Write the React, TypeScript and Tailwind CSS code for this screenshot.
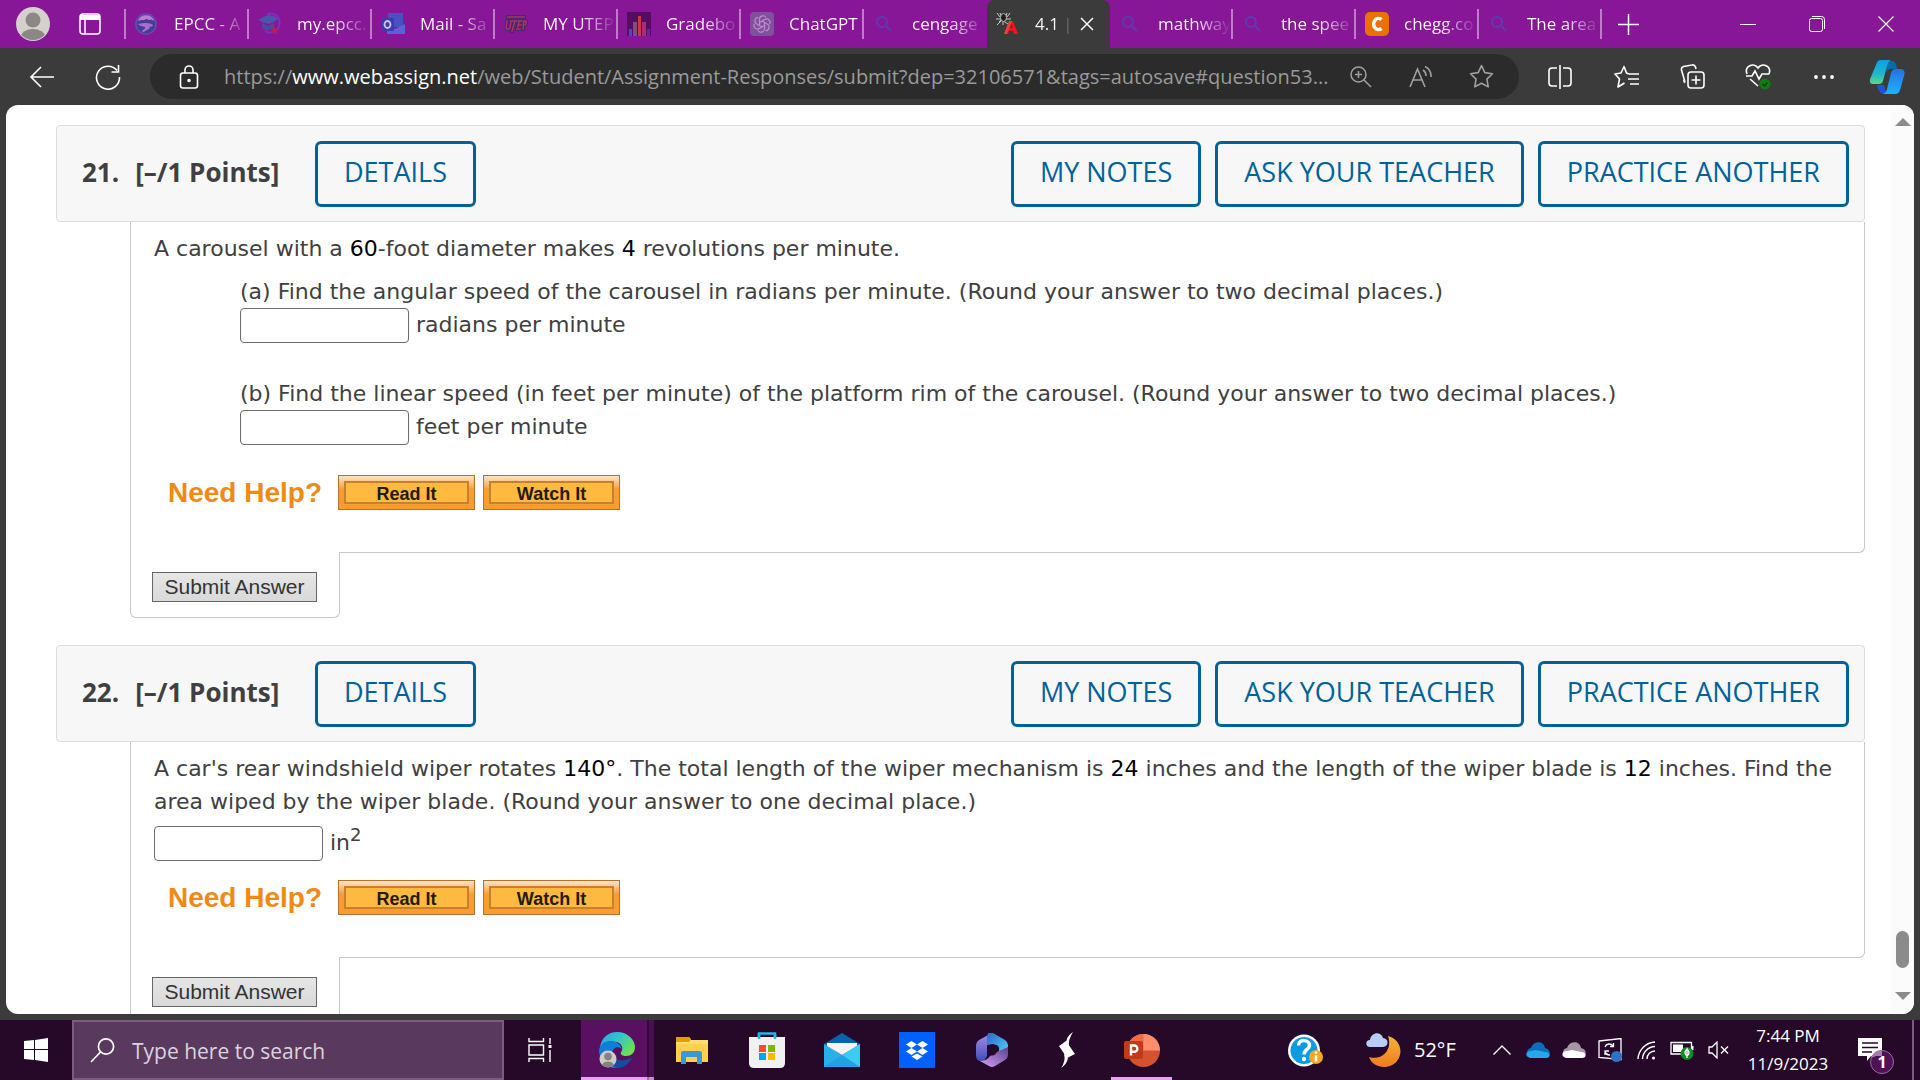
import React from "react";
import clsx from "clsx";

type TabItem = {
  title: string;
  icon: React.ReactNode;
  active?: boolean;
  divider?: boolean;
};

const SearchFavicon = () => (
  <svg width="18" height="18" viewBox="0 0 18 18" fill="none" stroke="#5a3bb0" strokeWidth="2" className="ml-0.5">
    <circle cx="7" cy="7" r="5" />
    <path d="M11 11l5 5" />
  </svg>
);

const EpccFavicon = () => (
  <svg width="22" height="22" viewBox="0 0 24 24">
    <circle cx="12" cy="12" r="11" fill="#3f3f9c" />
    <path d="M3 9a9.500 9.500 0 0 1 18 0q-4-3-6-1-2-3-5 0-3-1-7 1z" fill="#c07bd0" />
    <path d="M3 12q4-1 9-1t8 2q-1 2-5 2 3 1-1 3l-5 3q-2-1-1-2 5-3 2-4-4 0-7-3z" fill="#a86fc8" />
    <circle cx="12" cy="12" r="11" fill="none" stroke="#6c4bb5" strokeWidth="1.500" />
  </svg>
);

const GradFavicon = () => (
  <svg width="24" height="24" viewBox="0 0 24 24">
    <path d="M9 2a9.500 9.500 0 1 1-2 17" fill="none" stroke="#7a2fc0" strokeWidth="2" />
    <path d="M0 8q6-4 11-5 6 1 9 4-5 4-9 5-6-1-11-4z" fill="#4c55ac" />
    <path d="M4 11v5c3 3 9 3 12 0v-5l-6 3z" fill="#4a4aa0" />
    <path d="M15 14l6 5-3 0 1 3-2 0-1-3-2 2z" fill="#c01f4c" />
  </svg>
);

const OutlookFavicon = () => (
  <svg width="24" height="24" viewBox="0 0 24 24">
    <rect x="7" y="1" width="15" height="14" fill="#4a50c4" />
    <path d="M6 12l8 5 10-5v10H6z" fill="#5a62d8" />
    <rect x="0" y="6" width="13" height="13" rx="1" fill="#3a3cae" />
    <ellipse cx="6.500" cy="12.500" rx="3" ry="3.500" fill="none" stroke="#cfc3ee" strokeWidth="1.800" />
  </svg>
);

const UtepFavicon = () => (
  <svg width="24" height="22" viewBox="0 0 24 22" fill="none" strokeLinecap="square">
    <path d="M4 4h16M3 8l-1 7q1 3 4 0l1-7M8 8h5M11 8l-3 10M14 14l1-6h3M14 12h3M13 16h3M19 16l1-8h2q1 4-2 4" stroke="#3d2a6e" strokeWidth="3.500" />
    <path d="M4 4h16M3 8l-1 7q1 3 4 0l1-7M8 8h5M11 8l-3 10M14 14l1-6h3M14 12h3M13 16h3M19 16l1-8h2q1 4-2 4" stroke="#b0355e" strokeWidth="1.500" />
  </svg>
);

const GradebookFavicon = () => (
  <svg width="24" height="24" viewBox="0 0 24 24">
    <rect width="24" height="24" fill="#560c60" />
    <rect x="2" y="17" width="3" height="7" fill="#5048c0" />
    <rect x="6" y="10" width="4" height="14" fill="#8a4a78" />
    <rect x="11" y="4" width="3" height="20" fill="#c23a50" />
    <rect x="15" y="10" width="4" height="14" fill="#b32a70" />
    <rect x="20" y="17" width="3" height="7" fill="#7020a0" />
  </svg>
);

const GptFavicon = () => (
  <svg width="24" height="24" viewBox="0 0 24 24" fill="none" stroke="#c08ad0" strokeWidth="1.200">
    <rect width="24" height="24" rx="4" fill="#81509b" stroke="none" />
    {[0, 60, 120, 180, 240, 300].map((angle) => (
      <path key={angle} d="M9.500 13.500V7a3.500 3.500 0 0 1 6.500-1.500" transform={`rotate(${angle} 12 12)`} />
    ))}
  </svg>
);

const WebassignFavicon = () => (
  <svg width="24" height="24" viewBox="0 0 24 24">
    <path d="M1 1l3 4M14 1l-3 4M0 7h15M1 13l5-5 6 4M7 3v10M4 1l2 6M11 1l-2 6M3 10l3-3" stroke="#c8c8c8" strokeWidth="1" fill="none" />
    <ellipse cx="7.500" cy="5.500" rx="3" ry="4" fill="#1c1c1c" stroke="#bbb" strokeWidth="1" />
    <path d="M8 22h4l1-3h4l1 3h4L17 9h-4z" fill="#e51a1a" />
    <path d="M14 16h2.500l-1-4z" fill="#3b3b3b" />
    <path d="M13 9h3l-5 13H8z" fill="#f06a60" opacity="0.500" />
  </svg>
);

const CheggFavicon = () => (
  <svg width="24" height="24" viewBox="0 0 24 24">
    <rect width="24" height="24" rx="5" fill="#eb7100" />
    <path d="M16.500 7.500a5 5.500 0 1 0 0 9" fill="none" stroke="#fff" strokeWidth="3.500" />
  </svg>
);

const TABS: TabItem[] = [
  { title: "EPCC - A", icon: <EpccFavicon />, divider: true },
  { title: "my.epcc.", icon: <GradFavicon />, divider: true },
  { title: "Mail - Sa", icon: <OutlookFavicon />, divider: true },
  { title: "MY UTEP", icon: <UtepFavicon />, divider: true },
  { title: "Gradebo", icon: <GradebookFavicon />, divider: true },
  { title: "ChatGPT", icon: <GptFavicon />, divider: true },
  { title: "cengage", icon: <SearchFavicon /> },
  { title: "4.1 |", icon: <WebassignFavicon />, active: true },
  { title: "mathway", icon: <SearchFavicon />, divider: true },
  { title: "the spee", icon: <SearchFavicon />, divider: true },
  { title: "chegg.co", icon: <CheggFavicon />, divider: true },
  { title: "The area", icon: <SearchFavicon />, divider: true },
];

const Tab = ({ title, icon, active, divider }: TabItem) => (
  <div
    className={clsx(
      "flex w-[123px] shrink-0 items-center pl-[9px]",
      active && "rounded-t-lg bg-[#3b3b3b]"
    )}
  >
    <span className="flex w-[39px] shrink-0 items-center">{icon}</span>
    <button
      className={clsx(
        "overflow-hidden bg-linear-to-r bg-clip-text text-left whitespace-nowrap text-transparent",
        active && "w-9 from-white from-60% to-[#4b4b4b]",
        !active && title === "ChatGPT" && "w-[72px] from-white to-white",
        !active && title !== "ChatGPT" && "w-[72px] from-white from-50% to-[#881798]"
      )}
    >
      {title}
    </button>
    {active && (
      <button aria-label="Close tab" className="flex w-8 justify-center">
        <svg width="14" height="14" viewBox="0 0 14 14" stroke="#fff" strokeWidth="1.500">
          <path d="M1 1l12 12M13 1L1 13" />
        </svg>
      </button>
    )}
    {divider && <span className="ml-auto h-[30px] w-0.5 shrink-0 bg-[#bd7cc6]" />}
  </div>
);

const TabStrip = () => (
  <div className="flex h-12 shrink-0 bg-[#881798] text-[17px]">
    <button aria-label="Profile" className="flex w-[66px] shrink-0 items-center justify-center">
      <svg width="34" height="34" viewBox="0 0 34 34">
        <clipPath id="avatar">
          <circle cx="17" cy="17" r="16" />
        </clipPath>
        <circle cx="17" cy="17" r="17" fill="#d3d0cd" />
        <circle cx="17" cy="13" r="7.500" fill="#8a8785" />
        <ellipse cx="17" cy="30" rx="12" ry="8" fill="#8a8785" clipPath="url(#avatar)" />
      </svg>
    </button>
    <button aria-label="Tab actions" className="flex w-12 shrink-0 items-center justify-center">
      <svg width="22" height="22" viewBox="0 0 22 22" fill="none" stroke="#fff" strokeWidth="1.500">
        <rect x="1" y="1" width="20" height="20" rx="3" />
        <path d="M6 7v14" />
        <path d="M1 2h20v5H1z" fill="#fff" stroke="none" />
      </svg>
    </button>
    <span className="ml-2.5 h-[30px] w-0.5 shrink-0 self-center bg-[#bd7cc6]" />
    {TABS.map((tab) => (
      <Tab key={tab.title} {...tab} />
    ))}
    <button aria-label="New tab" className="flex w-[52px] shrink-0 items-center justify-center">
      <svg width="21" height="21" viewBox="0 0 21 21" stroke="#fff" strokeWidth="1.500">
        <path d="M10.500 0v21M0 10.500h21" />
      </svg>
    </button>
    <div className="ml-auto flex">
      <button aria-label="Minimize" className="flex w-[69px] items-center justify-center">
        <span className="h-px w-4 bg-white" />
      </button>
      <button aria-label="Restore" className="flex w-[69px] items-center justify-center">
        <svg width="16" height="16" viewBox="0 0 16 16" fill="none" stroke="#fff">
          <rect x="0.500" y="2.500" width="13" height="13" rx="2" />
          <path d="M3 0.500h9.500a3 3 0 0 1 3 3V13" />
        </svg>
      </button>
      <button aria-label="Close" className="flex w-[69px] items-center justify-center">
        <svg width="16" height="16" viewBox="0 0 16 16" stroke="#fff" strokeWidth="1.200">
          <path d="M0.500 0.500l15 15M15.500 0.500l-15 15" />
        </svg>
      </button>
    </div>
  </div>
);

const ToolButton = ({ label, children }: { label: string; children: React.ReactNode }) => (
  <button aria-label={label} className="flex w-[66px] shrink-0 items-center justify-center">
    {children}
  </button>
);

const PillButton = ({ label, children }: { label: string; children: React.ReactNode }) => (
  <button aria-label={label} className="flex w-15 shrink-0 items-center justify-center">
    {children}
  </button>
);

const Toolbar = () => (
  <div className="flex h-[57px] shrink-0 items-center pl-[9px]">
    <ToolButton label="Back">
      <svg width="26" height="22" viewBox="0 0 26 22" fill="none" stroke="#fff" strokeWidth="1.600">
        <path d="M25 11H2M12 1L2 11l10 10" />
      </svg>
    </ToolButton>
    <ToolButton label="Refresh">
      <svg width="26" height="26" viewBox="0 0 26 26" fill="none" stroke="#fff" strokeWidth="1.600">
        <path d="M24.500 13A11.500 11.500 0 1 1 22 6.500M23.500 1v7H16.500" />
      </svg>
    </ToolButton>
    <div className="ml-[9px] flex h-[45px] min-w-0 flex-1 rounded-full bg-[#2b2b2b] pr-2">
      <button aria-label="Site information" className="flex w-[74px] shrink-0 items-center justify-center pl-1">
        <svg width="20" height="24" viewBox="0 0 20 24" fill="none" stroke="#fff" strokeWidth="1.600">
          <rect x="1.500" y="8" width="17" height="15" rx="2.500" />
          <path d="M6 8V5a4 4 0 0 1 8 0v3" />
          <circle cx="10" cy="15.500" r="1" fill="#fff" />
        </svg>
      </button>
      <div className="min-w-0 flex-1 self-center truncate text-[20px] text-[#9a9a9a]">
        https://<span className="text-white">www.webassign.net</span>
        /web/Student/Assignment-Responses/submit?dep=32106571&amp;tags=autosave#question53...
      </div>
      <PillButton label="Zoom">
        <svg width="22" height="22" viewBox="0 0 22 22" fill="none" stroke="#a0a0a0" strokeWidth="1.500">
          <circle cx="8.500" cy="8.500" r="7.500" />
          <path d="M14 14l7 7M8.500 5v7M5 8.500h7" />
        </svg>
      </PillButton>
      <PillButton label="Read aloud">
        <svg width="24" height="22" viewBox="0 0 24 22" fill="none" stroke="#a0a0a0" strokeWidth="1.600">
          <path d="M1 21L8.500 3 16 21M4 14h9M14 4a7 7 0 0 1 3 6M16 0.500a11 11 0 0 1 6 10.500" />
        </svg>
      </PillButton>
      <PillButton label="Add to favorites">
        <svg width="25" height="25" viewBox="0 0 24 24" fill="none" stroke="#a0a0a0" strokeWidth="1.500" strokeLinejoin="round">
          <path d="M12 1.500l3.200 6.800 7.300 1-5.300 5.200 1.300 7.500L12 18.500 5.500 22l1.300-7.500L1.500 9.300l7.300-1z" />
        </svg>
      </PillButton>
    </div>
    <div className="ml-2 flex h-full shrink-0 pr-[3px]">
      <ToolButton label="Split screen">
        <svg width="24" height="24" viewBox="0 0 24 24" fill="none" stroke="#fff" strokeWidth="1.600">
          <path d="M9 3H4a3 3 0 0 0-3 3v12a3 3 0 0 0 3 3h5M15 3h5a3 3 0 0 1 3 3v12a3 3 0 0 1-3 3h-5M12 0v24" />
        </svg>
      </ToolButton>
      <ToolButton label="Favorites">
        <svg width="25" height="24" viewBox="0 0 25 24" fill="none" stroke="#fff" strokeWidth="1.600" strokeLinejoin="round">
          <path d="M15 9L12.500 8 10 1.500 7 8 1 9l4.500 5L4 22l6.500-4M15 9h10M14 14h11M16 19h9" />
        </svg>
      </ToolButton>
      <ToolButton label="Collections">
        <svg width="25" height="25" viewBox="0 0 25 25" fill="none" stroke="#fff" strokeWidth="1.600">
          <path d="M5 18L1.500 6a3 3 0 0 1 2-3.500L12 1a3 3 0 0 1 3.500 2l.5 2M5 19a3 3 0 0 1-1-3" />
          <rect x="8" y="8" width="16" height="16" rx="3" />
          <path d="M16 11.500v9M11.500 16h9" />
        </svg>
      </ToolButton>
      <ToolButton label="Browser essentials">
        <svg width="26" height="26" viewBox="0 0 26 26" fill="none" stroke="#fff" strokeWidth="1.600">
          <path d="M2 10C-1 2 9-2 13 4 17-2 27 2 24 10M1 12h6l3-5 4 8 3-5h7M5 15l8 7" />
          <circle cx="20" cy="20" r="5.500" fill="#107c10" stroke="none" />
          <path d="M17.500 20l2 2 3-3.500" stroke="#06400a" strokeWidth="1.500" />
        </svg>
      </ToolButton>
      <ToolButton label="Settings and more">
        <svg width="20" height="4" viewBox="0 0 20 4" fill="#fff">
          <circle cx="2" cy="2" r="1.900" />
          <circle cx="10" cy="2" r="1.900" />
          <circle cx="18" cy="2" r="1.900" />
        </svg>
      </ToolButton>
      <button aria-label="Copilot" className="flex w-15 items-center justify-center">
        <svg width="36" height="34" viewBox="0 0 36 34">
          <defs>
            <linearGradient id="copilotLeft" x1="0" y1="0" x2="0" y2="1">
              <stop offset="0" stopColor="#0fa0e4" />
              <stop offset="0.600" stopColor="#20b8c8" />
              <stop offset="1" stopColor="#5bd88a" />
            </linearGradient>
            <linearGradient id="copilotRight" x1="0" y1="0" x2="0" y2="1">
              <stop offset="0" stopColor="#2a6fe0" />
              <stop offset="1" stopColor="#18b4ff" />
            </linearGradient>
          </defs>
          <path d="M18 1h6q3 1 4 8h-6q-4 0-5 4z" fill="#0b6ba8" />
          <path d="M8 25h7l2 9h-3q-4-1-6-9z" fill="#1c56d8" />
          <path d="M7 5q1-5 5-5h10q-3 1-4 6l-4 15q-1 3-4 3H4q-4 0-3-5z" fill="url(#copilotLeft)" />
          <path d="M22 13q1-4 5-4h5q5 1 3 7l-4 14q-1 4-5 4H14q3-1 4-5z" fill="url(#copilotRight)" />
        </svg>
      </button>
    </div>
  </div>
);

const OutlineButton = ({ children }: { children: React.ReactNode }) => (
  <button className="h-[66px] rounded-md border-3 border-[#00629b] px-[26px] pb-0.5 text-[27px] font-medium text-[#00629b]">
    {children}
  </button>
);

const HelpButton = ({ children }: { children: React.ReactNode }) => (
  <button className="h-[35px] w-[137px] border border-[#b5722c] bg-linear-to-b from-[#fde3c4] to-[#fb9c30] to-40% p-[5px]">
    <span className="flex h-full items-center justify-center border-2 border-[#c4812f] bg-[#fdb940] pt-0.5 text-[18px] leading-4 font-bold text-[#241a08]">
      {children}
    </span>
  </button>
);

const NeedHelp = () => (
  <div className="flex items-center gap-2 pl-3.5 font-['Liberation_Sans',Arial,sans-serif]">
    <span className="w-[162px] text-[28px] leading-8 font-bold text-[#f08a14]">Need Help?</span>
    <HelpButton>Read It</HelpButton>
    <HelpButton>Watch It</HelpButton>
  </div>
);

const AnswerRow = ({ id, unit }: { id: string; unit: React.ReactNode }) => (
  <div className="flex h-[35px] gap-[7px]">
    <input id={id} type="text" className="h-full w-[169px] rounded-[4px] border border-[#6b6b6b] bg-white px-2" />
    <label htmlFor={id}>{unit}</label>
  </div>
);

const Num = ({ children }: { children: React.ReactNode }) => <span className="text-black">{children}</span>;

const Question = ({ number, children }: { number: number; children: React.ReactNode }) => (
  <section className="mb-[27px]">
    <header className="flex h-[97px] items-center rounded-sm border border-[#dcdcdc] bg-[#f7f7f7] pr-[15px] pl-[25px]">
      <h2 className="flex w-[233px] gap-4 pb-0.5 text-[26px] font-bold whitespace-nowrap">
        <span>{number}.</span>
        <span>[–/1 Points]</span>
      </h2>
      <OutlineButton>DETAILS</OutlineButton>
      <div className="ml-auto flex gap-3.5">
        <OutlineButton>MY NOTES</OutlineButton>
        <OutlineButton>ASK YOUR TEACHER</OutlineButton>
        <OutlineButton>PRACTICE ANOTHER</OutlineButton>
      </div>
    </header>
    <div className="ml-[74px]">
      <div className="rounded-br-md border border-t-0 border-[#c8c8c8] pt-2.5 pr-6 pb-[42px] pl-[23px] font-['DejaVu_Sans',Verdana,sans-serif] text-[22px] leading-[33px]">
        {children}
      </div>
      <div className="-mt-px h-[66px] w-[210px] rounded-b-md border border-t-0 border-[#c8c8c8] bg-white pt-5 pl-[21px]">
        <button className="h-[30px] w-[165px] border border-[#666] bg-linear-to-b from-[#e6e6e6] to-[#d9d9d9] font-['Liberation_Sans',Arial,sans-serif] text-[21px] leading-7 whitespace-nowrap text-[#333]">
          Submit Answer
        </button>
      </div>
    </div>
  </section>
);

const Page = () => (
  <div className="mx-1.5 mb-1.5 flex min-h-0 flex-1 overflow-hidden rounded-xl bg-white text-[#404040]">
    <main className="min-w-0 flex-1 overflow-hidden pt-5 pr-[26px] pl-[50px]">
      <Question number={21}>
        <p>
          A carousel with a <Num>60</Num>-foot diameter makes <Num>4</Num> revolutions per minute.
        </p>
        <div className="mt-2.5 mb-[30px] flex flex-col gap-[34px] pl-[86px]">
          <div>
            <p>(a) Find the angular speed of the carousel in radians per minute. (Round your answer to two decimal places.)</p>
            <AnswerRow id="angular-speed" unit="radians per minute" />
          </div>
          <div>
            <p>(b) Find the linear speed (in feet per minute) of the platform rim of the carousel. (Round your answer to two decimal places.)</p>
            <AnswerRow id="linear-speed" unit="feet per minute" />
          </div>
        </div>
        <NeedHelp />
      </Question>

      <Question number={22}>
        <p className="mb-2">
          A car's rear windshield wiper rotates <Num>140°</Num>. The total length of the wiper mechanism is <Num>24</Num>{" "}
          inches and the length of the wiper blade is <Num>12</Num> inches. Find the area wiped by the wiper blade. (Round
          your answer to one decimal place.)
        </p>
        <div className="mb-[19px]">
          <AnswerRow
            id="wiper-area"
            unit={
              <>
                in<sup className="text-[18px]">2</sup>
              </>
            }
          />
        </div>
        <NeedHelp />
      </Question>
    </main>
    <div className="flex w-[23px] shrink-0 flex-col items-center bg-[#fbfbfb] pt-[13px] pb-3.5">
      <svg width="16" height="8" viewBox="0 0 16 8" fill="#8b8b8b">
        <path d="M8 0l8 8H0z" />
      </svg>
      <span className="mt-auto mb-6 h-[37px] w-[13px] rounded-full bg-[#8b8b8b]" />
      <svg width="16" height="8" viewBox="0 0 16 8" fill="#8b8b8b">
        <path d="M0 0h16L8 8z" />
      </svg>
    </div>
  </div>
);

const TaskButton = ({ label, children }: { label: string; children: React.ReactNode }) => (
  <button aria-label={label} className="flex w-[75px] shrink-0 items-center justify-center">
    {children}
  </button>
);

const EdgeIcon = () => (
  <svg width="36" height="36" viewBox="0 0 36 36">
    <defs>
      <linearGradient id="edgeTop" x1="0" y1="0" x2="1" y2="0.600">
        <stop offset="0" stopColor="#2f9fe6" />
        <stop offset="0.500" stopColor="#2fc6cc" />
        <stop offset="1" stopColor="#6be24e" />
      </linearGradient>
    </defs>
    <path d="M1 16C2 6 9 0 18 0c11 0 18 8 18 15 0 6-4 9-9 9-4 0-6-2-5-4 3-3 1-9-5-10C10 8 4 10 1 16z" fill="url(#edgeTop)" />
    <path d="M0 18c1-6 6-9 11-9 6 0 11 3 12 8-3-3-9-2-10 4-1 7 5 12 12 12-3 3-8 3-11 3C6 34 0 27 0 18z" fill="#0d7fd8" />
    <path d="M13 19c-1 6 6 11 13 9 3-1 5-2 7-2-3 6-9 10-15 10-7-2-9-10-5-17z" fill="#10509c" />
    <circle cx="9" cy="27" r="8.500" fill="#cfcbc8" />
    <circle cx="9" cy="24.500" r="3.800" fill="#858280" />
    <path d="M3 33a6.500 5.500 0 0 1 12 0 9 9 0 0 1-12 0z" fill="#858280" />
  </svg>
);

const ExplorerIcon = () => (
  <svg width="32" height="27" viewBox="0 0 32 27">
    <path d="M0 1q0-1 1-1h12l2 3H32v22H0z" fill="#ffcf4e" />
    <path d="M0 1q0-1 1-1h12l2 2-2 3H0z" fill="#e0a000" />
    <path d="M0 5h13l2-2h17v4H0z" fill="#ffdb72" />
    <path d="M5 27V16q0-2 2-2h17q2 0 2 2v11h-5v-7h-11v7z" fill="#3a96dd" />
  </svg>
);

const StoreIcon = () => (
  <svg width="36" height="36" viewBox="0 0 36 36">
    <path d="M10 7V1.500h16V7" fill="none" stroke="#1fb6f0" strokeWidth="2.500" />
    <path d="M0 5h36v26q0 5-5 5H5q-5 0-5-5z" fill="#f1f1f1" />
    <path d="M10 5V2M26 5V2M10 4v3M26 4v3" stroke="#1fb6f0" strokeWidth="2.500" />
    <path d="M10 13h7v7h-7z" fill="#f25022" />
    <path d="M19 13h7v7h-7z" fill="#7fba00" />
    <path d="M10 21h7v7h-7z" fill="#00a4ef" />
    <path d="M19 21h7v7h-7z" fill="#ffb900" />
  </svg>
);

const MailIcon = () => (
  <svg width="36" height="34" viewBox="0 0 36 34">
    <path d="M0 11L18 0l18 11v6H0z" fill="#0a63ad" />
    <path d="M0 11l18 11L36 11v23H0z" fill="#28b0ea" />
    <path d="M3 10h30v3L18 22 3 13z" fill="#f4f4f4" />
    <path d="M36 11L18 22l18 12z" fill="#3ccbf4" />
    <path d="M0 34l18-12 18 12z" fill="#1c94dc" opacity="0.500" />
  </svg>
);

const DropboxIcon = () => (
  <svg width="36" height="36" viewBox="0 0 36 36">
    <rect width="36" height="36" fill="#0061fe" />
    <path
      d="M12.500 9l5.500 3.500-5.500 3.500L7 12.500zM23.500 9l5.500 3.500-5.500 3.500-5.500-3.500zM12.500 16l5.500 3.500-5.500 3.500L7 19.500zM23.500 16l5.500 3.500-5.500 3.500-5.500-3.500zM18 21.500l5.500 3L18 28l-5.500-3.500z"
      fill="#fff"
    />
  </svg>
);

const M365Icon = () => (
  <svg width="32" height="34" viewBox="0 0 32 34">
    <defs>
      <linearGradient id="m365Left" x1="0" y1="0" x2="0" y2="1">
        <stop offset="0" stopColor="#b08ae8" />
        <stop offset="1" stopColor="#3c50b8" />
      </linearGradient>
      <linearGradient id="m365Right" x1="0" y1="0" x2="1" y2="1">
        <stop offset="0" stopColor="#2f66c8" />
        <stop offset="1" stopColor="#4ed6fa" />
      </linearGradient>
      <linearGradient id="m365Bottom" x1="0" y1="1" x2="1" y2="0">
        <stop offset="0" stopColor="#d9a0fa" />
        <stop offset="1" stopColor="#5a3f8c" />
      </linearGradient>
    </defs>
    <path d="M16 0L3 7Q0 9 0 12v11q0 3 3 5h5l3-5V13L16 0z" fill="url(#m365Left)" />
    <path d="M12 0h5l12 7q3 2 3 5v10l-9-3v-4q0-3-6-4l-6 1V4z" fill="url(#m365Right)" />
    <path d="M32 14v8q0 3-3 5l-10 6q-3 2-6 0l-9-5q7 0 10-5l9-5z" fill="url(#m365Bottom)" />
    <ellipse cx="16" cy="17" rx="5" ry="5.500" fill="#260929" />
  </svg>
);

const SwiftIcon = () => (
  <svg width="16" height="36" viewBox="0 0 16 36" fill="#fff">
    <path d="M7 9l-7 5 8 12 8-4zM14 0Q8 4 7 10l3 4Q9 8 14 0zM2 36q6-4 7-10l-4-4q2 7-3 14z" />
  </svg>
);

const PowerPointIcon = () => (
  <svg width="36" height="33" viewBox="0 0 36 33">
    <circle cx="19.500" cy="16.500" r="16.500" fill="#d35230" />
    <path d="M3 16.500a16.500 16.500 0 0 1 33 0z" fill="#ff8f6b" />
    <path d="M19.500 0A16.500 16.500 0 0 0 3 16.500h16.500z" fill="#ed6c47" />
    <rect x="0" y="7" width="19" height="18" rx="2" fill="#c13b1b" />
    <path d="M7 21.500v-10h3.200a3 3 0 0 1 0 6.300H7" fill="none" stroke="#fff" strokeWidth="2.400" />
  </svg>
);

const TrayButton = ({ label, children }: { label: string; children: React.ReactNode }) => (
  <button aria-label={label} className="flex w-9 shrink-0 items-center justify-center">
    {children}
  </button>
);

const Taskbar = () => (
  <footer className="flex h-15 shrink-0 bg-[#260929] text-white">
    <button aria-label="Start" className="flex w-[72px] shrink-0 items-center justify-center">
      <svg width="24" height="24" viewBox="0 0 24 24" fill="#fff">
        <path d="M0 3l10-1v9H0zM11 2l13-2v11H11zM0 12h10v10L0 21zM11 12h13v12l-13-2z" />
      </svg>
    </button>
    <label className="flex w-108 shrink-0 items-center gap-[17px] border-2 border-[#7b5c80] bg-[#5a395e] pl-4">
      <svg width="25" height="25" viewBox="0 0 25 25" fill="none" stroke="#fff" strokeWidth="1.700" className="shrink-0">
        <circle cx="16" cy="8.500" r="7.600" />
        <path d="M10.500 14L1 24" />
      </svg>
      <input
        type="text"
        placeholder="Type here to search"
        className="w-full min-w-0 bg-transparent pt-1 text-[21px] placeholder:text-[#dcd3dd]"
      />
    </label>
    <button aria-label="Task view" className="flex w-[77px] shrink-0 items-center justify-center pr-1.5">
      <svg width="24" height="24" viewBox="0 0 24 24" fill="none" stroke="#fff" strokeWidth="1.400">
        <path d="M1 0v3.500h14.500V0M1 24v-3.500h14.500V24M1 7h14.500v10H1zM22 0v6M22 12v12" />
        <path d="M20.500 7h3v3h-3z" fill="#fff" stroke="none" />
      </svg>
    </button>
    <button aria-label="Microsoft Edge" className="flex w-[73px] shrink-0">
      <span className="flex h-full w-[66px] items-center justify-center border-b-3 border-[#e9a0f5] bg-[#5a1060] pt-[3px] pl-1.5">
        <EdgeIcon />
      </span>
      <span className="h-full w-0.5 border-b-3 border-[#9c6aa6] bg-[#350a3a]" />
      <span className="h-full w-[5px] border-b-3 border-[#c48fce] bg-[#481050]" />
    </button>
    <TaskButton label="File Explorer">
      <ExplorerIcon />
    </TaskButton>
    <TaskButton label="Microsoft Store">
      <StoreIcon />
    </TaskButton>
    <TaskButton label="Mail">
      <MailIcon />
    </TaskButton>
    <TaskButton label="Dropbox">
      <DropboxIcon />
    </TaskButton>
    <TaskButton label="Microsoft 365">
      <M365Icon />
    </TaskButton>
    <TaskButton label="Swift">
      <SwiftIcon />
    </TaskButton>
    <div className="flex px-[7px]">
      <button aria-label="PowerPoint" className="flex w-[61px] items-center justify-center border-b-3 border-[#e9a0f5] pt-[3px]">
        <PowerPointIcon />
      </button>
    </div>

    <div className="ml-auto flex shrink-0">
      <button aria-label="Get help" className="flex w-[60px] items-center">
        <svg width="35" height="33" viewBox="0 0 35 33">
          <circle cx="16" cy="16.500" r="16" fill="#fff" />
          <circle cx="16" cy="16.500" r="13.500" fill="#0a9be0" />
          <path d="M10.500 11.500c0-7 11-6 11 0 0 4-5.500 4-5.500 9" fill="none" stroke="#fff" strokeWidth="3.500" />
          <circle cx="16" cy="25" r="2.200" fill="#fff" />
          <circle cx="28" cy="23" r="7" fill="#f5a81c" />
          <path d="M28 21.500v6M28 17.500v2.200" stroke="#fff" strokeWidth="2.500" />
        </svg>
      </button>
      <button className="flex w-[136px] items-center gap-[13px] pl-[18px] text-[20px]">
        <svg width="35" height="34" viewBox="0 0 35 34" className="shrink-0">
          <defs>
            <linearGradient id="moon" x1="0" y1="0" x2="0" y2="1">
              <stop offset="0" stopColor="#f2b53a" />
              <stop offset="1" stopColor="#f07c1c" />
            </linearGradient>
          </defs>
          <path d="M22 3c12 3 16 16 9 25-7 9-24 8-28-4 13 4 24-7 19-21z" fill="url(#moon)" />
          <path d="M4 14c-5 0-5-7 0-7 1-8 11-9 13-2 6 0 6 9 0 9z" fill="#b5cdf7" />
        </svg>
        52°F
      </button>
      <TrayButton label="Show hidden icons">
        <svg width="18" height="10" viewBox="0 0 18 10" fill="none" stroke="#fff" strokeWidth="1.400">
          <path d="M0.500 9.500L9 1l8.500 8.500" />
        </svg>
      </TrayButton>
      <TrayButton label="OneDrive">
        <svg width="24" height="16" viewBox="0 0 24 16">
          <path d="M4 14C0 12 0 7 5 6 8-2 18-1 19 6c6 1 6 8 2 9z" fill="#0f6cbd" />
          <path d="M4 16c-5-1-5-7 1-7l5-1 9 2c6 0 6 6 1 6z" fill="#28a8ea" />
        </svg>
      </TrayButton>
      <TrayButton label="OneDrive personal">
        <svg width="24" height="16" viewBox="0 0 24 16">
          <path d="M4 14C0 12 0 7 5 6 8-2 18-1 19 6c6 1 6 8 2 9z" fill="#a497a6" />
          <path d="M4 16c-5-1-5-7 1-7l5-1 9 2c6 0 6 6 1 6z" fill="#fff" />
        </svg>
      </TrayButton>
      <TrayButton label="Windows Update">
        <svg width="25" height="24" viewBox="0 0 25 24" fill="none" stroke="#fff" strokeWidth="1.300">
          <path d="M1 3l22-2.500v21L1 19.500z" />
          <path d="M7 9a4.500 4.500 0 0 1 8-1M15.500 5v3.500H12M7 17v-4h4M7 13a5 5 0 0 0 5 4" />
          <circle cx="18.500" cy="18.500" r="5.500" fill="#2f72c4" stroke="none" />
        </svg>
      </TrayButton>
      <TrayButton label="Network">
        <svg width="19" height="19" viewBox="0 0 19 19" fill="none" stroke="#fff" strokeWidth="1.400">
          <path d="M1 18A18 18 0 0 1 18 1M5.500 18A13 13 0 0 1 18 5.500M10 18a8 8 0 0 1 8-8" />
          <circle cx="16.500" cy="17" r="1.500" fill="#fff" stroke="none" />
        </svg>
      </TrayButton>
      <TrayButton label="Battery">
        <svg width="24" height="19" viewBox="0 0 24 19" fill="none" stroke="#fff" strokeWidth="1.300">
          <path d="M1 1.500h20.500V13H1z" />
          <path d="M3 3.500h10V11H3zM22 5h1.500v4H22z" fill="#fff" stroke="none" />
          <circle cx="17" cy="12.500" r="6.500" fill="#128a22" stroke="none" />
          <path d="M17 17v-9q-4 4 0 7 4-3 0-7" />
        </svg>
      </TrayButton>
      <TrayButton label="Volume muted">
        <svg width="21" height="18" viewBox="0 0 21 18" fill="none" stroke="#fff" strokeWidth="1.300">
          <path d="M1 6h3l5-5v16l-5-5H1zM13 5.500l7 7M20 5.500l-7 7" />
        </svg>
      </TrayButton>
      <button className="flex w-[104px] flex-col items-center justify-center text-[17px] leading-7">
        <span>7:44 PM</span>
        <span>11/9/2023</span>
      </button>
      <button aria-label="Notifications" className="flex w-[72px] items-center justify-center pt-3">
        <span className="relative">
          <svg width="36" height="36" viewBox="0 0 36 36">
            <path d="M0 0h24v18H13l-4 5v-5H0z" fill="#fff" />
            <path d="M4 5h16M4 9.500h16M4 14h10" stroke="#260929" strokeWidth="1.400" />
            <circle cx="24" cy="24" r="11.500" fill="#4e1259" stroke="#9a6aa2" />
            <path d="M13 20a12 12 0 0 1 11-8v6h-6z" fill="#a27daa" />
          </svg>
          <span className="absolute right-0 bottom-0 flex size-6 items-center justify-center text-[16px] font-bold">1</span>
        </span>
      </button>
      <button aria-label="Show desktop" className="w-2 border-l-2 border-[#7b5c80]" />
    </div>
  </footer>
);

export default function App() {
  return (
    <div className="flex h-screen flex-col overflow-hidden bg-[#3b3b3b] font-['Open_Sans','Noto_Sans',sans-serif] text-white">
      <TabStrip />
      <Toolbar />
      <Page />
      <Taskbar />
    </div>
  );
}
